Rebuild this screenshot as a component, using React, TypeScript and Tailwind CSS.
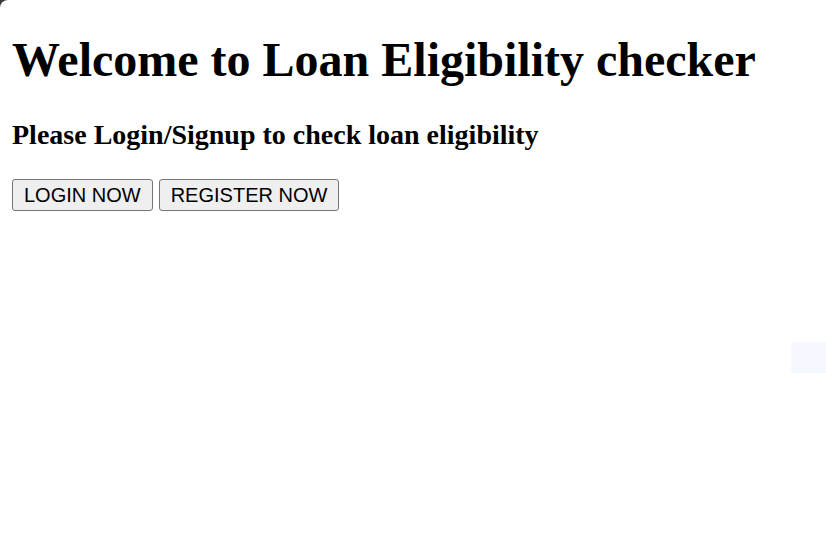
export default function App() {
  return (
    <div className="min-h-[547px] bg-[#3b3b3b]">
      <div className="relative min-h-[547px] overflow-hidden rounded-tl-[8px] bg-white px-3 pt-8 text-black">
        <h1 className="font-['Liberation_Serif',serif] text-[48px] font-bold leading-[55px]">
          Welcome to Loan Eligibility checker
        </h1>
        <h3 className="mt-8 font-['Liberation_Serif',serif] text-[28px] font-bold leading-[32px]">
          Please Login/Signup to check loan eligibility
        </h3>
        <div className="mt-7 flex gap-[6px] font-['Liberation_Sans',sans-serif] text-[20px]">
          <button className="h-8 rounded-[3px] border border-[#767676] bg-[#efefef] px-[11px] leading-[30px]">
            LOGIN NOW
          </button>
          <button className="h-8 rounded-[3px] border border-[#767676] bg-[#efefef] px-[11px] leading-[30px]">
            REGISTER NOW
          </button>
        </div>
        {/* faint floating widget at the right edge */}
        <div className="absolute left-[791px] top-[342px] h-[31px] w-[35px] bg-[#f5f8fe]" />
      </div>
    </div>
  );
}
